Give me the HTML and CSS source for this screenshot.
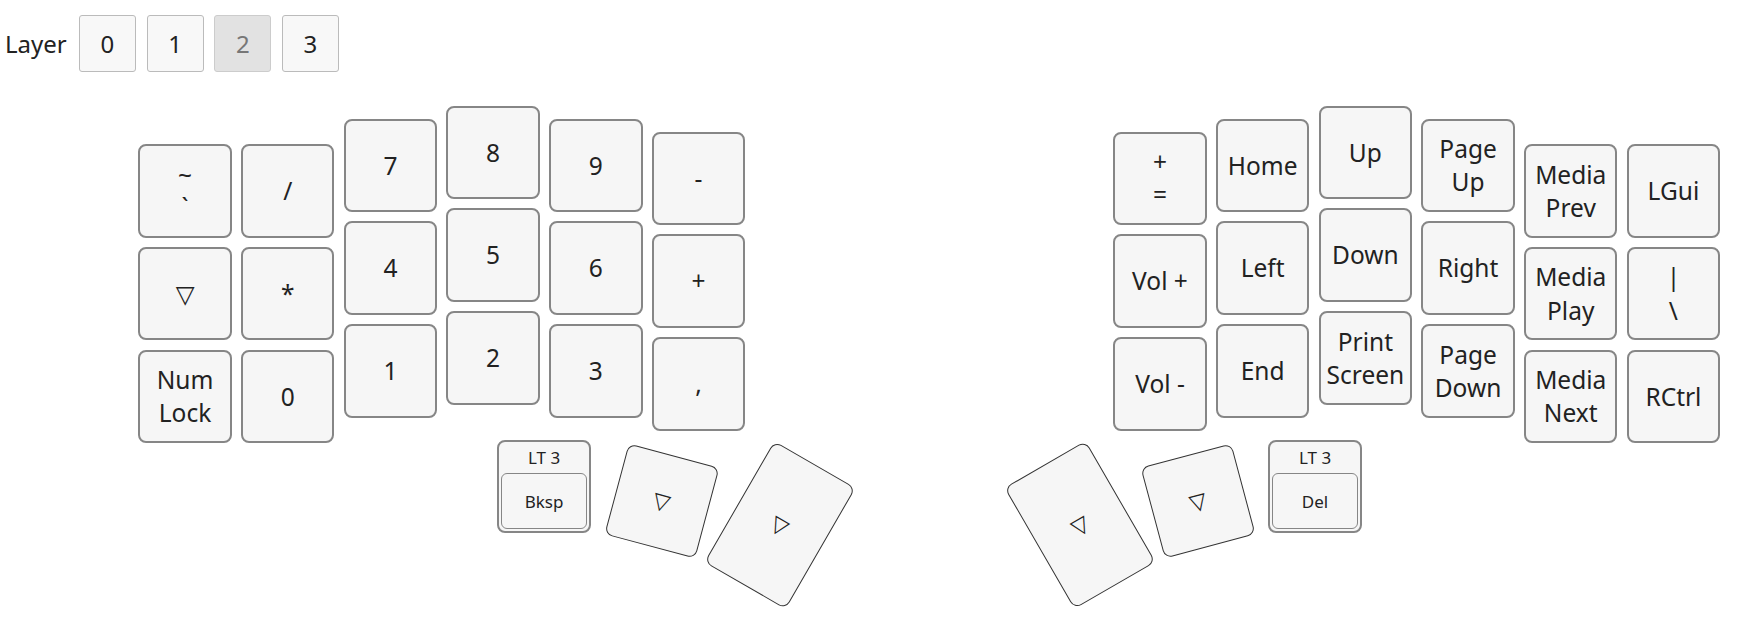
FILE: index.html
```html
<!DOCTYPE html>
<html lang="en">
<head>
    <meta charset="UTF-8">
    <meta name="viewport" content="width=device-width, initial-scale=1.0">
    <title>Keymap - Layer 2</title>
    <link rel="stylesheet" href="styles.css">
</head>
<body>
    <div class="toolbar">
        <span class="toolbar-label">Layer</span>
        <button class="layer-btn">0</button>
        <button class="layer-btn">1</button>
        <button class="layer-btn active">2</button>
        <button class="layer-btn">3</button>
    </div>

    <div class="board">
        <!-- left half -->
        <div class="half">
            <div class="col drop-3">
                <div class="key">~<br>`</div>
                <div class="key">&#9661;</div>
                <div class="key">Num<br>Lock</div>
            </div>
            <div class="col drop-3">
                <div class="key">/</div>
                <div class="key">*</div>
                <div class="key">0</div>
            </div>
            <div class="col drop-1">
                <div class="key">7</div>
                <div class="key">4</div>
                <div class="key">1</div>
            </div>
            <div class="col">
                <div class="key">8</div>
                <div class="key">5</div>
                <div class="key">2</div>
            </div>
            <div class="col drop-1">
                <div class="key">9</div>
                <div class="key">6</div>
                <div class="key">3</div>
            </div>
            <div class="col drop-2">
                <div class="key">-</div>
                <div class="key">+</div>
                <div class="key">,</div>
            </div>
        </div>

        <!-- right half -->
        <div class="half">
            <div class="col drop-2">
                <div class="key">+<br>=</div>
                <div class="key">Vol +</div>
                <div class="key">Vol -</div>
            </div>
            <div class="col drop-1">
                <div class="key">Home</div>
                <div class="key">Left</div>
                <div class="key">End</div>
            </div>
            <div class="col">
                <div class="key">Up</div>
                <div class="key">Down</div>
                <div class="key">Print<br>Screen</div>
            </div>
            <div class="col drop-1">
                <div class="key">Page<br>Up</div>
                <div class="key">Right</div>
                <div class="key">Page<br>Down</div>
            </div>
            <div class="col drop-3">
                <div class="key">Media<br>Prev</div>
                <div class="key">Media<br>Play</div>
                <div class="key">Media<br>Next</div>
            </div>
            <div class="col drop-3">
                <div class="key">LGui</div>
                <div class="key">|<br>\</div>
                <div class="key">RCtrl</div>
            </div>
        </div>

        <!-- thumb keys sit on the canvas at their own angles -->
        <div class="key hold thumb-l1">
            <span class="hold-label">LT 3</span>
            <span class="tap">Bksp</span>
        </div>
        <div class="key tilted thumb-l2"><span>&#9661;</span></div>
        <div class="key tilted tall thumb-l3"><span>&#9661;</span></div>

        <div class="key tilted tall thumb-r3"><span>&#9661;</span></div>
        <div class="key tilted thumb-r2"><span>&#9661;</span></div>
        <div class="key hold thumb-r1">
            <span class="hold-label">LT 3</span>
            <span class="tap">Del</span>
        </div>
    </div>
</body>
</html>
```

FILE: styles.css
```css
body {
    margin: 0;
    font-family: "Noto Sans", "DejaVu Sans", sans-serif;
    color: #222;
    background: #fff;
}
.toolbar {
    display: flex;
    align-items: center;
    gap: 10.7px;
    padding: 15px 0 0 5px;
}
.toolbar-label {
    font-size: 24px;
    margin-right: 1.5px;
}
.layer-btn {
    width: 57px;
    height: 57px;
    box-sizing: border-box;
    border: 1px solid #bbb;
    border-radius: 3px;
    background: #f8f8f8;
    color: #222;
    font-family: inherit;
    font-size: 24px;
    padding: 0;
}
.layer-btn.active {
    background: #e2e2e2;
    border-color: #ccc;
    color: #777;
}
.board {
    position: relative;
    display: flex;
    align-items: flex-start;
    gap: 368px;
    margin-top: 33.7px;
    padding-left: 138.3px;
    height: 520px;
}
.half {
    display: flex;
    align-items: flex-start;
    gap: 9.2px;
}
.col {
    display: flex;
    flex-direction: column;
    gap: 9.2px;
}
.col.drop-1 { margin-top: 13px; }
.col.drop-2 { margin-top: 26px; }
.col.drop-3 { margin-top: 38.6px; }
.key {
    width: 93.5px;
    height: 93.5px;
    box-sizing: border-box;
    border: 2px solid #868686;
    border-radius: 8px;
    background: #f6f6f6;
    display: flex;
    align-items: center;
    justify-content: center;
    text-align: center;
    font-size: 24.5px;
    line-height: 1.36;
}

/* hold-tap keys: layer label on top, tap key inset below */
.key.hold {
    position: absolute;
    top: 334px;
    flex-direction: column;
    justify-content: flex-start;
    padding: 1.5px 1.5px 2px;
    font-size: 17px;
}
.hold-label {
    height: 30px;
    line-height: 30px;
}
.tap {
    flex: 1;
    align-self: stretch;
    display: flex;
    align-items: center;
    justify-content: center;
    border: 1.5px solid #868686;
    border-radius: 6px;
}
.thumb-l1 { left: 497.3px; }
.thumb-r1 { left: 1268.3px; }

.key.tilted {
    position: absolute;
    top: 348.5px;
    border: 1.2px solid #333;
    font-size: 22px;
}
.key.tall {
    height: 140px;
    top: 349.3px;
}
.thumb-l2 { left: 614.8px; transform: rotate(15deg); }
.thumb-l3 { left: 733.3px; transform: rotate(30deg); }
.thumb-r2 { left: 1151.3px; transform: rotate(-15deg); }
.thumb-r3 { left: 1032.8px; transform: rotate(-30deg); }
```
